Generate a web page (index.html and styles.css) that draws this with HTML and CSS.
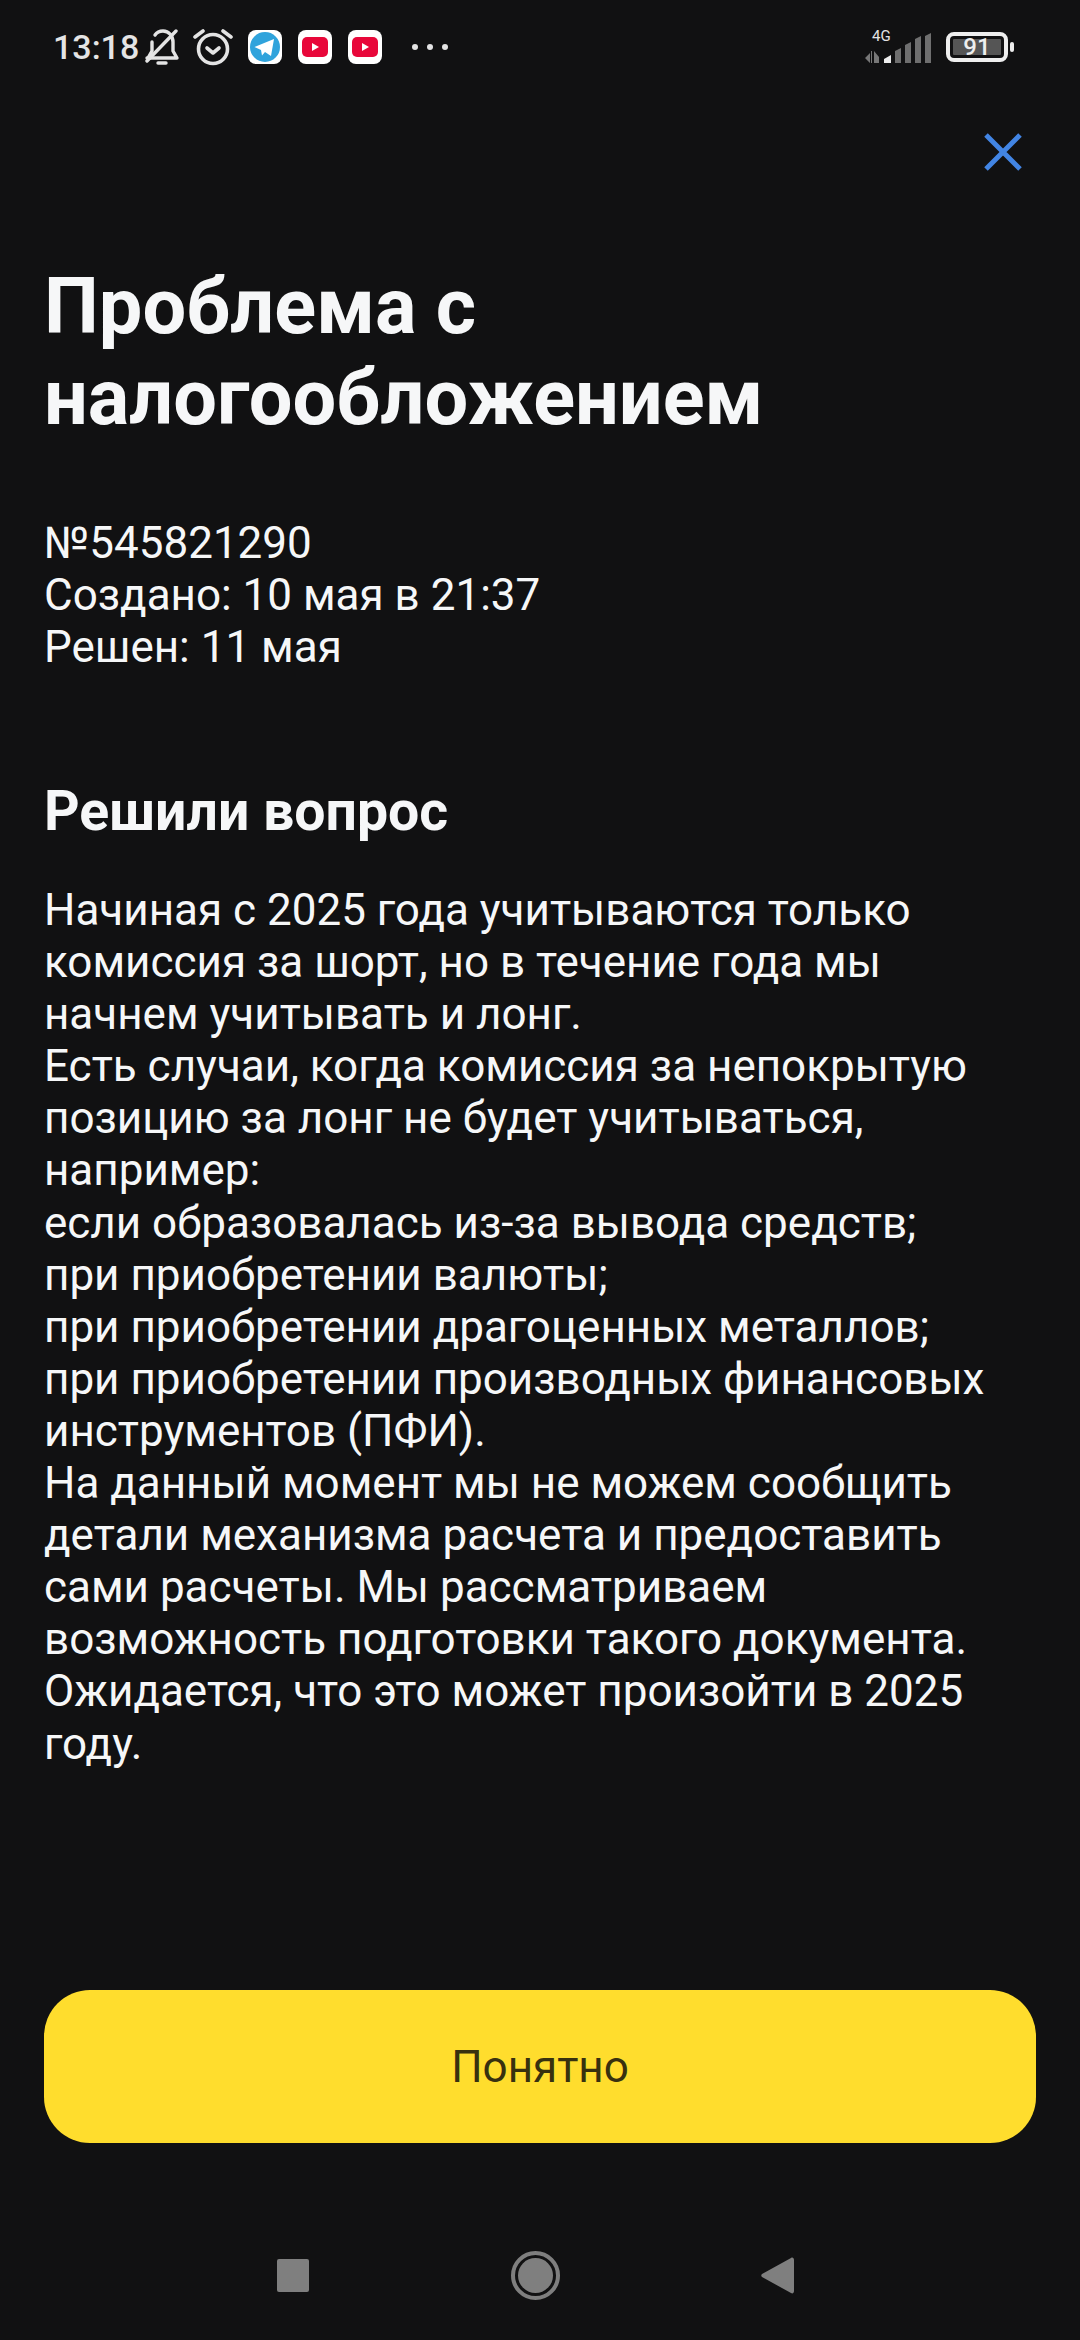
FILE: index.html
```html
<!DOCTYPE html>
<html lang="ru">
<head>
    <meta charset="UTF-8">
    <meta name="viewport" content="width=device-width, initial-scale=1.0">
    <title>Проблема с налогообложением</title>
    <link rel="stylesheet" href="styles.css">
</head>
<body>
    <div class="screen">
        <div class="status-bar">
            <div class="status-left">
                <span class="time">13:18</span>
                <svg class="ico-bell" width="34" height="38" viewBox="0 0 34 38" fill="none" stroke="#e4e4e4" stroke-width="3.4" stroke-linecap="round" stroke-linejoin="round">
                    <path d="M2 30h30l-4-7v-9c0-6-4-11-10-11-3 0-6 1-8 4"/>
                    <path d="M7 14v9l-4 7"/>
                    <path d="M13 35h8"/>
                    <path d="M2 33L31 3"/>
                </svg>
                <svg class="ico-alarm" width="40" height="38" viewBox="0 0 40 38" fill="none" stroke="#e4e4e4" stroke-width="3.6" stroke-linecap="round" stroke-linejoin="round">
                    <circle cx="20" cy="21" r="14.500"/>
                    <path d="M14 20l6 5 6-5"/>
                    <path d="M2 9l8-6"/>
                    <path d="M38 9l-8-6"/>
                </svg>
                <svg class="app-ico" width="34" height="34" viewBox="0 0 34 34">
                    <rect width="34" height="34" rx="8" fill="#fff"/>
                    <circle cx="17" cy="17" r="15" fill="#2fa3dc"/>
                    <path d="M6.500 17L26 9l-3 17-6-4-3 3.500-1-5.500z" fill="#fff"/>
                </svg>
                <svg class="app-ico" width="34" height="34" viewBox="0 0 34 34">
                    <rect width="34" height="34" rx="8" fill="#fff"/>
                    <rect x="4" y="7" width="26" height="20" rx="5" fill="#e8073a"/>
                    <path d="M14 13l7 4-7 4z" fill="#fff"/>
                </svg>
                <svg class="app-ico" width="34" height="34" viewBox="0 0 34 34">
                    <rect width="34" height="34" rx="8" fill="#fff"/>
                    <rect x="4" y="7" width="26" height="20" rx="5" fill="#e8073a"/>
                    <path d="M14 13l7 4-7 4z" fill="#fff"/>
                </svg>
                <div class="more-dots"><i></i><i></i><i></i></div>
            </div>
            <div class="status-right">
                <div class="signal">
                    <span class="net-label">4G</span>
                    <svg width="67" height="30" viewBox="0 0 67 30">
                        <path d="M0 25l5-5v10zM6 18l1 0v12H6zM9 18l5 6v6H9z" fill="#777"/>
                        <path d="M19 26l7-4v8h-7z" fill="#eee"/>
                        <path d="M30 18l6-3v15h-6z" fill="#6f6f6f"/>
                        <path d="M40 12l6-3v21h-6z" fill="#6f6f6f"/>
                        <path d="M50 6l6-3v27h-6z" fill="#6f6f6f"/>
                        <path d="M60 3l6-3v30h-6z" fill="#6f6f6f"/>
                    </svg>
                </div>
                <div class="battery">
                    <div class="battery-body">
                        <div class="battery-level">91</div>
                    </div>
                    <div class="battery-cap"></div>
                </div>
            </div>
        </div>

        <div class="close-row">
            <svg width="38" height="38" viewBox="0 0 38 38" stroke="#4285e4" stroke-width="5">
                <path d="M2 2l34 34M36 2L2 36"/>
            </svg>
        </div>

        <h1>Проблема с налогообложением</h1>

        <div class="meta">
            <div>№545821290</div>
            <div>Создано: 10 мая в 21:37</div>
            <div>Решен: 11 мая</div>
        </div>

        <h2>Решили вопрос</h2>

        <p class="answer">
            Начиная с 2025 года учитываются только комиссия за шорт, но в течение года мы начнем учитывать и лонг.<br>
            Есть случаи, когда комиссия за непокрытую позицию за лонг не будет учитываться, например:<br>
            если образовалась из-за вывода средств;<br>
            при приобретении валюты;<br>
            при приобретении драгоценных металлов;<br>
            при приобретении производных финансовых инструментов (ПФИ).<br>
            На данный момент мы не можем сообщить детали механизма расчета и предоставить сами расчеты. Мы рассматриваем возможность подготовки такого документа.<br>
            Ожидается, что это может произойти в 2025 году.
        </p>

        <div class="btn-container">
            <button type="button" class="btn">Понятно</button>
        </div>

        <div class="nav-bar">
            <div class="nav-square"></div>
            <div class="nav-home"><div class="nav-home-inner"></div></div>
            <svg width="33" height="37" viewBox="0 0 33 37"><path d="M30 1c1.500-1 3 0 3 2v31c0 2-1.500 3-3 2L1 20c-1-.8-1-2.200 0-3z" fill="#7f7f7f"/></svg>
        </div>
    </div>
</body>
</html>
```

FILE: styles.css
```css
* { margin: 0; padding: 0; box-sizing: border-box; }
body {
    font-family: Roboto, Arial, sans-serif;
    background: #111112;
    color: #f6f7f8;
}
.screen {
    width: 1080px; height: 2340px;
    display: flex; flex-direction: column;
    padding: 0 44px;
}

/* status bar */
.status-bar {
    height: 94px;
    padding-top: 27px;
    display: flex; justify-content: space-between; align-items: flex-start;
}
.status-left { display: flex; align-items: center; height: 40px; margin-left: 9px; }
.time { font-size: 34px; font-weight: 500; color: #e4e4e4; width: 92px; }
.ico-bell { margin-right: 14px; }
.ico-alarm { margin-right: 15px; }
.app-ico { margin-right: 16px; }
.more-dots { display: flex; gap: 9px; margin-left: 14px; }
.more-dots i { width: 6px; height: 6px; border-radius: 50%; background: #e4e4e4; }
.status-right { display: flex; align-items: flex-start; margin-right: 22px; }
.signal { position: relative; width: 67px; height: 36px; margin-right: 14px; padding-top: 6px; }
.net-label { position: absolute; left: 7px; top: 2px; font-size: 15px; line-height: 15px; color: #e4e4e4; }
.battery { display: flex; align-items: center; margin-top: 5px; }
.battery-body {
    width: 62px; height: 30px;
    border: 4px solid #eee; border-radius: 8px;
    padding: 3px;
}
.battery-level {
    height: 16px; width: 100%;
    background: #555; border-radius: 1px;
    font-size: 24px; line-height: 16px; font-weight: 500;
    text-align: center; color: #eee;
}
.battery-cap { width: 4px; height: 10px; margin-left: 2px; background: #eee; border-radius: 2px; }

.close-row { display: flex; justify-content: flex-end; margin-right: 14px; padding-top: 39px; height: 120px; }

h1 { font-size: 77.5px; line-height: 91px; font-weight: 700; width: 800px; margin-top: 47px; }

.meta { font-size: 44px; line-height: 52px; margin-top: 74px; }

h2 { font-size: 55.4px; line-height: 60px; font-weight: 700; margin-top: 109px; }

.answer { font-size: 44px; line-height: 52.1px; margin-top: 42px; }

.btn-container { margin-top: auto; }
.btn {
    width: 100%; height: 153px;
    background: #ffdd2d; color: #38310f;
    border: none; border-radius: 46px;
    font-family: inherit; font-size: 44px;
}

.nav-bar {
    height: 197px;
    margin-left: 233px; margin-right: 242px; padding-top: 67px;
    display: flex; justify-content: space-between; align-items: center;
}
.nav-square { width: 32px; height: 33px; background: #7f7f7f; border-radius: 2px; }
.nav-home {
    width: 49px; height: 49px; border: 4px solid #7f7f7f; border-radius: 50%;
    padding: 3px;
}
.nav-home-inner { width: 100%; height: 100%; background: #7f7f7f; border-radius: 50%; }
```
